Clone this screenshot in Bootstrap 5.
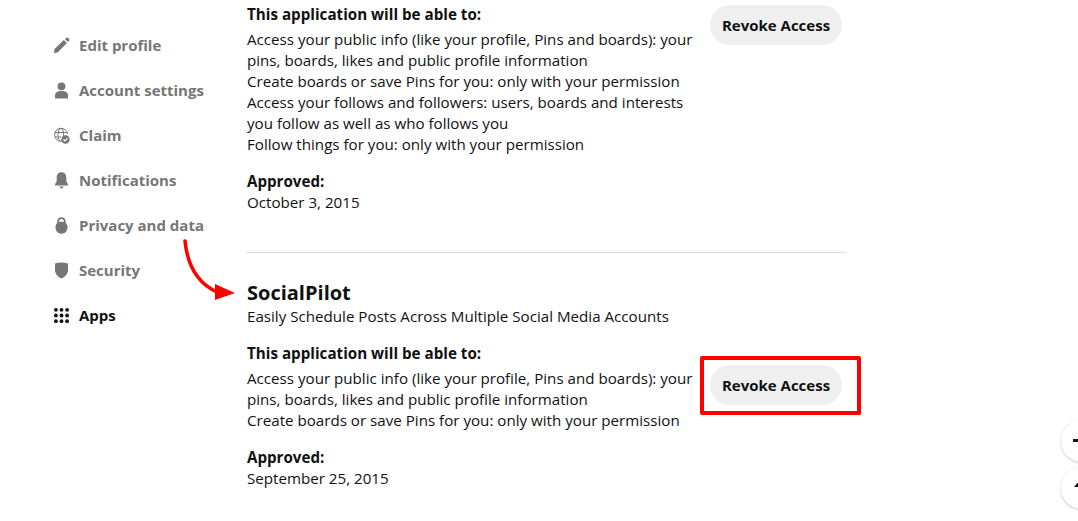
<!DOCTYPE html>
<html lang="en">
<head>
    <meta charset="UTF-8">
    <meta name="viewport" content="width=device-width, initial-scale=1.0">
    <title>Apps - Settings</title>
    <link href="https://cdn.jsdelivr.net/npm/bootstrap@5.3.0/dist/css/bootstrap.min.css" rel="stylesheet">
    <style>
        html, body {
            height: 521px;
            overflow: hidden;
        }
        body {
            font-family: "Open Sans", "Noto Sans", sans-serif;
            font-size: 15.15px;
            color: #111;
            position: relative;
        }
        .page-wrap {
            padding-left: 53px;
        }
        .side-col {
            width: 193px;
            padding-top: 23px;
        }
        .side-link {
            height: 45px;
            color: #767676;
            font-size: 15px;
            font-weight: 700;
            gap: 9px;
            text-decoration: none;
        }
        .side-link.is-active {
            color: #111;
        }
        .side-link svg {
            width: 17px;
            height: 17px;
            flex: none;
        }
        .main-col {
            width: 600px;
        }
        .app-block {
            line-height: 21px;
        }
        .perm-head {
            font-weight: 700;
            font-size: 15.2px;
            margin-top: 4px;
            margin-bottom: 4px;
            padding-left: 1px;
        }
        .perm-text {
            width: 451px;
            padding-left: 1px;
        }
        .app-pad {
            padding-left: 1px;
        }
        .approved {
            margin-top: 16px;
            padding-left: 1px;
        }
        .approved b {
            display: block;
        }
        .app-name {
            font-size: 20px;
            font-weight: 700;
            line-height: 27px;
            margin: 0;
        }
        .app-sep {
            border-top: 1px solid #ddd;
            margin: 39px 0 26px;
            opacity: 1;
        }
        .app-body {
            margin-top: 12px;
        }
        .revoke-btn {
            background: #efefef;
            color: #111;
            border: 0;
            border-radius: 20px;
            font-size: 15px;
            font-weight: 700;
            width: 132px;
            height: 40px;
            padding: 0;
            flex: none;
        }
        .slot-first {
            padding-top: 5px;
            margin-right: 4px;
        }
        .slot-second {
            padding-top: 26px;
            margin-right: 4px;
        }
        .float-circle {
            position: absolute;
            left: 1061px;
            width: 42px;
            height: 42px;
            border-radius: 50%;
            background: #fff;
            box-shadow: 0 1px 3px rgba(0, 0, 0, .22);
        }
        .circle-top {
            top: 420px;
        }
        .circle-low {
            top: 467px;
        }
        .circle-top::after {
            content: "";
            position: absolute;
            left: 12px;
            top: 19px;
            width: 6px;
            height: 3px;
            background: #111;
        }
        .circle-low::after {
            content: "";
            position: absolute;
            left: 13px;
            top: 14px;
            width: 5px;
            height: 6px;
            background: #111;
            clip-path: polygon(100% 0, 100% 100%, 0 100%);
        }
        .red-box {
            position: absolute;
            left: 700px;
            top: 356px;
            width: 161px;
            height: 59px;
            border: 4px solid #f00;
            border-radius: 2px;
        }
        .red-arrow {
            position: absolute;
            left: 175px;
            top: 235px;
            width: 75px;
            height: 70px;
        }
    </style>
</head>
<body>
    <div class="page-wrap d-flex">
        <!-- Sidebar -->
        <nav class="side-col d-flex flex-column">
            <a class="side-link d-flex align-items-center" href="#">
                <svg viewBox="0 0 17 17"><path fill="currentColor" d="M1.500 12 10.800 2.900l3.200 3.200-9.200 9.200-4 .9zM12 1.900l1.400-1.200c.5-.4 1.100-.4 1.500 0l1.300 1.300c.4.400.4 1 0 1.500L15 4.900z"/></svg>
                <span>Edit profile</span>
            </a>
            <a class="side-link d-flex align-items-center" href="#">
                <svg viewBox="0 0 17 17"><circle fill="currentColor" cx="8.500" cy="4.300" r="3.900"/><path fill="currentColor" d="M2 16.500v-3.200C2 10.500 4.500 9 8.500 9s6.500 1.500 6.500 4.300v3.200z"/></svg>
                <span>Account settings</span>
            </a>
            <a class="side-link d-flex align-items-center" href="#">
                <svg viewBox="0 0 17 17"><g fill="none" stroke="currentColor" stroke-width="1"><path d="M8.300 14.300a6.500 6.500 0 1 1 6.300-7.300"/><ellipse cx="7.800" cy="7.800" rx="2.800" ry="6.500"/><path d="M1.800 5.500h12M1.800 10h6.500"/></g><circle fill="currentColor" cx="12.500" cy="12.500" r="4.200"/><path fill="none" stroke="#fff" stroke-width="1.200" d="m10.500 12.500 1.500 1.500 2.500-2.700"/></svg>
                <span>Claim</span>
            </a>
            <a class="side-link d-flex align-items-center" href="#">
                <svg viewBox="0 0 17 17"><path fill="currentColor" d="M8.500.3c-3 0-4.800 2.200-4.800 5v3.900L2 12.200v1.300h13v-1.300l-1.700-3V5.300c0-2.800-1.800-5-4.800-5zM6.500 14.500h4l-.6 1.500c-.7.500-2.100.5-2.800 0z"/></svg>
                <span>Notifications</span>
            </a>
            <a class="side-link d-flex align-items-center" href="#">
                <svg viewBox="0 0 17 17"><path fill="currentColor" fill-rule="evenodd" d="M8.500.3C6 .3 4.300 2.100 4.300 4.600v1.500C3 7.200 2.500 8.500 2.500 10.500c0 3.700 2.500 6.200 6 6.200s6-2.500 6-6.200c0-2-.5-3.300-1.800-4.400V4.600C12.700 2.100 11 .3 8.500.3zm0 1.800c1.500 0 2.400 1 2.400 2.600v.4c-.7-.3-1.500-.4-2.400-.4s-1.700.1-2.400.4v-.4c0-1.600.9-2.600 2.400-2.600z"/></svg>
                <span>Privacy and data</span>
            </a>
            <a class="side-link d-flex align-items-center" href="#">
                <svg viewBox="0 0 17 17"><path fill="currentColor" d="M2 1.500C4 .8 6.200.5 8.500.5s4.500.3 6.500 1V8c0 3.600-2.700 6.800-6.500 8.500C4.700 14.800 2 11.600 2 8z"/></svg>
                <span>Security</span>
            </a>
            <a class="side-link is-active d-flex align-items-center" href="#">
                <svg viewBox="0 0 17 17"><g fill="currentColor"><circle cx="2.900" cy="2.800" r="1.900"/><circle cx="8.500" cy="2.800" r="1.900"/><circle cx="14.100" cy="2.800" r="1.900"/><circle cx="2.900" cy="8.500" r="1.900"/><circle cx="8.500" cy="8.500" r="1.900"/><circle cx="14.100" cy="8.500" r="1.900"/><circle cx="2.900" cy="14.200" r="1.900"/><circle cx="8.500" cy="14.200" r="1.900"/><circle cx="14.100" cy="14.200" r="1.900"/></g></svg>
                <span>Apps</span>
            </a>
        </nav>

        <!-- Apps list -->
        <main class="main-col">
            <section class="app-block d-flex justify-content-between">
                <div>
                    <div class="perm-head">This application will be able to:</div>
                    <div class="perm-text">
                        Access your public info (like your profile, Pins and boards): your pins, boards, likes and public profile information<br>
                        Create boards or save Pins for you: only with your permission<br>
                        Access your follows and followers: users, boards and interests you follow as well as who follows you<br>
                        Follow things for you: only with your permission
                    </div>
                    <div class="approved"><b>Approved:</b>October 3, 2015</div>
                </div>
                <div class="slot-first"><button class="btn revoke-btn" type="button">Revoke Access</button></div>
            </section>
            <hr class="app-sep">
            <section class="app-block">
                <h2 class="app-name app-pad">SocialPilot</h2>
                <div class="app-pad">Easily Schedule Posts Across Multiple Social Media Accounts</div>
                <div class="app-body d-flex justify-content-between">
                    <div>
                        <div class="perm-head">This application will be able to:</div>
                        <div class="perm-text">
                            Access your public info (like your profile, Pins and boards): your pins, boards, likes and public profile information<br>
                            Create boards or save Pins for you: only with your permission
                        </div>
                        <div class="approved"><b>Approved:</b>September 25, 2015</div>
                    </div>
                    <div class="slot-second"><button class="btn revoke-btn" type="button">Revoke Access</button></div>
                </div>
            </section>
        </main>
    </div>

    <div class="float-circle circle-top"></div>
    <div class="float-circle circle-low"></div>

    <!-- annotations -->
    <div class="red-box"></div>
    <svg class="red-arrow" viewBox="0 0 75 70">
        <path fill="none" stroke="#f00" stroke-width="3.500" stroke-linecap="round" d="M10 6c2 20 10 41 32 51"/>
        <path fill="#f00" d="M40 49 60 58 40 65z"/>
    </svg>
</body>
</html>
